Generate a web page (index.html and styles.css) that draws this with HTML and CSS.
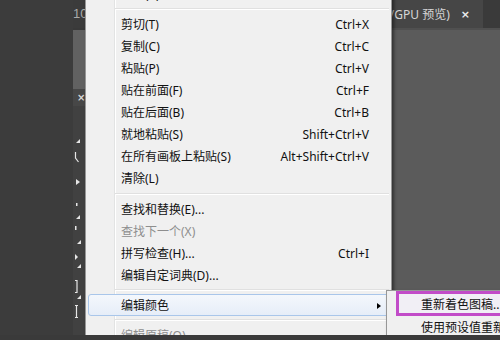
FILE: index.html
```html
<!DOCTYPE html>
<html lang="zh-CN">
<head>
<meta charset="utf-8">
<title>编辑菜单</title>
<link rel="stylesheet" href="styles.css">
</head>
<body>
<div class="screen">
  <div class="workspace">
    <div class="side"></div>
    <div class="tools">
      <div class="tools-tab">100</div>
      <div class="tools-head"></div>
      <div class="tools-close">×</div>
      <div class="tools-list">
        <svg class="tool-icons" width="13" height="229" viewBox="0 0 13 229">
          <g fill="#e6e6e6">
            <polygon points="7,33 7,37 3,37"/>
            <polygon points="3,73 3,79 7,76"/>
            <rect x="3" y="97" width="1.5" height="3"/>
            <polygon points="7,109 7,113 3,113"/>
            <rect x="2" y="120" width="1.5" height="4"/>
            <polygon points="8,134 8,138 4,138"/>
            <polygon points="2,148 2,154 5,151"/>
            <polygon points="8,158 8,162 4,162"/>
            <polygon points="8,189 8,193 4,193"/>
          </g>
          <g fill="none" stroke="#e6e6e6" stroke-width="1.2">
            <path d="M2.5 46 L2.5 52 L5.5 56"/>
            <path d="M2 174.5 H4 V186.5 H2"/>
            <path d="M2 199.5 H5 M3.5 199.5 V211.5 M2 211.5 H5"/>
          </g>
        </svg>
      </div>
    </div>
    <div class="doc">
      <div class="doc-tabs">
        <div class="doc-tab">
          <span class="doc-title">(RGB/GPU 预览)</span>
          <span class="doc-close">×</span>
        </div>
      </div>
      <div class="canvas"></div>
    </div>
  </div>
  <div class="status"></div>

  <div class="menu">
    <div class="item"><span class="label">重做(R)</span><span class="key">Shift+Ctrl+Z</span></div>
    <div class="sep"></div>
    <div class="item"><span class="label">剪切(T)</span><span class="key">Ctrl+X</span></div>
    <div class="item"><span class="label">复制(C)</span><span class="key">Ctrl+C</span></div>
    <div class="item"><span class="label">粘贴(P)</span><span class="key">Ctrl+V</span></div>
    <div class="item"><span class="label">贴在前面(F)</span><span class="key">Ctrl+F</span></div>
    <div class="item"><span class="label">贴在后面(B)</span><span class="key">Ctrl+B</span></div>
    <div class="item"><span class="label">就地粘贴(S)</span><span class="key">Shift+Ctrl+V</span></div>
    <div class="item"><span class="label">在所有画板上粘贴(S)</span><span class="key">Alt+Shift+Ctrl+V</span></div>
    <div class="item"><span class="label">清除(L)</span></div>
    <div class="sep sep-wide"></div>
    <div class="item"><span class="label">查找和替换(E)...</span></div>
    <div class="item disabled"><span class="label">查找下一个(X)</span></div>
    <div class="item"><span class="label">拼写检查(H)...</span><span class="key">Ctrl+I</span></div>
    <div class="item"><span class="label">编辑自定词典(D)...</span></div>
    <div class="sep"></div>
    <div class="item active"><span class="label">编辑颜色</span><span class="arrow"></span></div>
    <div class="sep"></div>
    <div class="item disabled"><span class="label">编辑原稿(O)</span></div>
  </div>

  <div class="submenu">
    <div class="sub-item marked">重新着色图稿...</div>
    <div class="sub-item">使用预设值重新着色(C)</div>
  </div>
</div>
</body>
</html>
```

FILE: styles.css
```css
* { box-sizing: border-box; }

html, body {
  margin: 0;
  padding: 0;
  width: 500px;
  height: 340px;
  overflow: hidden;
  background: #3b3b3b;
}

.screen {
  position: relative;
  width: 500px;
  height: 340px;
  overflow: hidden;
  font-family: "Noto Sans", "Noto Sans CJK SC", sans-serif;
  font-size: 12px;
}

.workspace {
  display: flex;
  height: 335px;
}

.side {
  width: 73px;
  background: #3c3c3c;
}

.tools {
  width: 13px;
  display: flex;
  flex-direction: column;
  overflow: hidden;
}

.tools-tab {
  height: 28px;
  line-height: 28px;
  color: #a9a9a9;
  font-family: "Liberation Sans", sans-serif;
  font-size: 13px;
  white-space: nowrap;
  background: #3b3b3b;
}

.tools-head {
  height: 61px;
  background: #616161;
  border-top: 2px solid #393939;
}

.tools-close {
  height: 17px;
  line-height: 17px;
  padding-left: 4px;
  color: #d8d8d8;
  font-family: "DejaVu Sans", sans-serif;
  font-weight: bold;
  font-size: 10px;
  background: #474747;
}

.tools-list {
  flex: 1;
  background: #414141;
}

.tool-icons { display: block; }

.doc {
  flex: 1;
  display: flex;
  flex-direction: column;
}

.doc-tabs {
  height: 28px;
  display: flex;
  background: #3a3a3a;
}

.doc-tab {
  width: 397px;
  display: flex;
  justify-content: flex-end;
  align-items: center;
  gap: 11px;
  padding-right: 13px;
  background: #464646;
  color: #d6d6d6;
  white-space: nowrap;
}

.doc-title {
  font-family: "Noto Sans", "Noto Sans CJK SC", sans-serif;
  font-size: 12px;
}

.doc-close {
  font-family: "DejaVu Sans", sans-serif;
  font-weight: bold;
  font-size: 11px;
  color: #ececec;
}

.canvas {
  flex: 1;
  background: #5b5b5b;
  border-top: 2px solid #505050;
}

.status {
  position: relative;
  z-index: 5;
  height: 5px;
  background: #3a3a3a;
}

/* Context menu */
.menu {
  position: absolute;
  left: 85px;
  top: -20px;
  width: 307px;
  padding: 2px;
  border: 1px solid #979797;
  background:
    linear-gradient(to right,
      #f0f0f0 0 28px,
      #e2e3e3 28px 29px,
      #ffffff 29px 30px,
      #f0f0f0 30px);
  box-shadow: 2px 2px 3px rgba(0, 0, 0, 0.45);
  color: #111;
}

.item {
  height: 22px;
  display: flex;
  align-items: center;
  padding: 2px 19px 0 32px;
  line-height: 18px;
  white-space: nowrap;
  border: 1px solid transparent;
  border-radius: 3px;
}

.item .key {
  margin-left: auto;
}

.item.disabled {
  color: #8e8e8e;
}

.item.active {
  background: linear-gradient(to bottom, #f4f7fc, #e6edf8);
  border-color: #a9c6ea;
}

.arrow {
  margin-left: auto;
  margin-right: -12px;
  width: 0;
  height: 0;
  border-top: 3.5px solid transparent;
  border-bottom: 3.5px solid transparent;
  border-left: 4px solid #000;
}

.sep {
  height: 8px;
  padding: 3px 0 0 27px;
}

.sep::before {
  content: "";
  display: block;
  border-top: 1px solid #e0e0e0;
  border-bottom: 1px solid #ffffff;
}

.sep-wide {
  height: 9px;
  padding-top: 4px;
}

/* Submenu */
.submenu {
  position: absolute;
  left: 386px;
  top: 290px;
  width: 140px;
  height: 60px;
  border: 1px solid #979797;
  background: #f0f0f0;
  color: #111;
  box-shadow: 2px 2px 3px rgba(0, 0, 0, 0.4);
}

.sub-item {
  height: 22px;
  line-height: 20px;
  padding: 2px 0 0 34px;
  white-space: nowrap;
}

.sub-item.marked {
  height: 25px;
  line-height: 19px;
  margin-left: 9px;
  padding: 1px 0 0 22px;
  border: 3px solid #c24cc8;
  background: #f1eff5;
}
```
